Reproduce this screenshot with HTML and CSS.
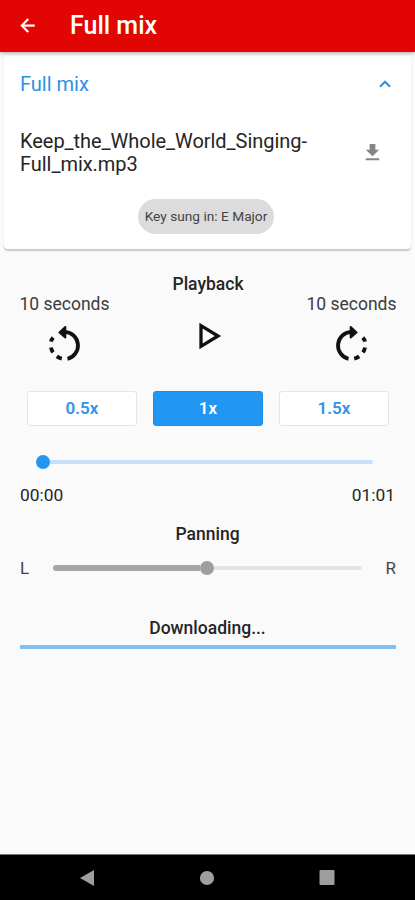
FILE: index.html
```html
<!DOCTYPE html>
<html lang="en">
<head>
<meta charset="utf-8">
<title>Full mix</title>
<link rel="stylesheet" href="styles.css">
</head>
<body>
<header class="appbar">
  <svg class="back" viewBox="0 0 24 24"><path d="M20 11H7.83l5.59-5.59L12 4l-8 8 8 8 1.41-1.41L7.83 13H20v-2z"/></svg>
  <h1>Full mix</h1>
</header>
<main>
  <section class="card">
    <div class="card-head"><span>Full mix</span>
      <svg class="chevron" viewBox="0 0 12 8"><path d="M1 6.7 6 1.7 11 6.7"/></svg>
    </div>
    <div class="file">
      <p>Keep_the_Whole_World_Singing-<br>Full_mix.mp3</p>
      <svg class="download" viewBox="0 0 24 24"><path d="M19 9h-4V3H9v6H5l7 7 7-7zM5 18v2h14v-2H5z"/></svg>
    </div>
    <span class="chip">Key sung in: E Major</span>
  </section>
  <section class="playback">
    <div class="seek"><span>10 seconds</span>
      <svg class="rotate" viewBox="0 0 42 42"><path d="M21 9.8A13.7 13.7 0 0 1 23.5 36.8M7 19.6Q7.5 17.4 9.2 15.6M7 25.5Q7.4 28.2 9 30.4M12.8 34.4Q15 36 17.8 36.7"/><path class="arrow" d="M21.3 5v10.5L15.5 10.5z"/></svg>
    </div>
    <div class="center"><h2>Playback</h2>
      <svg class="play" viewBox="0 0 24 30"><path d="M3 4.7v20.6L20 15z"/></svg>
    </div>
    <div class="seek"><span>10 seconds</span>
      <svg class="rotate mirror" viewBox="0 0 42 42"><path d="M21 9.8A13.7 13.7 0 0 1 23.5 36.8M7 19.6Q7.5 17.4 9.2 15.6M7 25.5Q7.4 28.2 9 30.4M12.8 34.4Q15 36 17.8 36.7"/><path class="arrow" d="M21.3 5v10.5L15.5 10.5z"/></svg>
    </div>
  </section>
  <div class="speeds"><button>0.5x</button><button class="active">1x</button><button>1.5x</button></div>
  <div class="progress"><i class="thumb"></i><i class="rail"></i></div>
  <div class="times"><span>00:00</span><span>01:01</span></div>
  <h2 class="pan-title">Panning</h2>
  <div class="pan"><span>L</span><div class="pan-slider"><i class="filled"></i><i class="thumb"></i><i class="rail"></i></div><span class="right">R</span></div>
  <h2 class="status">Downloading...</h2>
  <div class="loading"></div>
</main>
<nav>
  <svg viewBox="0 0 16 18"><path d="M15 1v16L1 9z"/></svg>
  <svg viewBox="0 0 16 18"><circle cx="8" cy="9" r="7.1"/></svg>
  <svg viewBox="0 0 16 18"><rect x=".5" y="1" width="15" height="15" rx="1"/></svg>
</nav>
</body>
</html>
```
FILE: styles.css
```css
* { box-sizing: border-box; }
body {
  margin: 0;
  height: 900px;
  display: flex;
  flex-direction: column;
  background: #fafafa;
  color: #252525;
  font-family: Roboto, sans-serif;
  overflow: hidden;
}
h1, h2, p { margin: 0; }
svg { display: block; flex: none; }
.appbar {
  height: 52px;
  flex: none;
  display: flex;
  align-items: center;
  padding: 0 0 2px 17px;
  background: #e10504;
  color: #fff;
  box-shadow: 0 1px 4px rgba(0, 0, 0, .35);
  z-index: 1;
}
.back { width: 21px; height: 21px; fill: #fff; stroke: #fff; stroke-width: .5; }
h1 { margin: 2px 0 0 32px; font-size: 25px; line-height: 30px; font-weight: 500; }
main { flex: 1; }
.card {
  margin: 4px 4px 0;
  height: 193px;
  padding: 0 16px;
  background: #fff;
  border-radius: 4px;
  box-shadow: 0 1.5px 1.5px rgba(0, 0, 0, .2);
  display: flex;
  flex-direction: column;
}
.card-head {
  height: 56px;
  display: flex;
  align-items: center;
  justify-content: space-between;
  color: #2b91e5;
  font-size: 20px;
}
.chevron { width: 12px; height: 8px; margin-right: 4px; fill: none; stroke: #2b91e5; stroke-width: 2; }
.file {
  margin-top: 18px;
  display: flex;
  justify-content: space-between;
  font-size: 20px;
  line-height: 23px;
  letter-spacing: -.04px;
}
.download { width: 23px; height: 23px; margin: 11px 11px 0 0; fill: #858585; }
.chip {
  align-self: center;
  margin: 23px 3px 0 0;
  width: 136px;
  height: 35px;
  border-radius: 18px;
  background: #dcdcdc;
  color: #444;
  font-size: 13.7px;
  line-height: 34px;
  text-align: center;
  white-space: nowrap;
}
.playback {
  display: flex;
  justify-content: space-between;
  margin-top: 21px;
  padding: 0 19px 0 20px;
  height: 121px;
}
.seek {
  width: 89px;
  padding-top: 23px;
  font-size: 17.5px;
  line-height: 22px;
  display: flex;
  flex-direction: column;
  align-items: center;
  color: #3c3c3c;
  white-space: nowrap;
}
.rotate { width: 42px; height: 42px; margin-top: 7px; fill: none; stroke: #111; stroke-width: 3.8; }
.rotate .arrow { fill: #111; stroke-width: 2; stroke-linejoin: round; }
.mirror { transform: scaleX(-1); }
.center { display: flex; flex-direction: column; align-items: center; padding-top: 4px; }
h2 { font-size: 17.5px; line-height: 20px; font-weight: 500; text-align: center; }
.play { width: 24px; height: 30px; margin: 27px 0 0 4px; fill: none; stroke: #111; stroke-width: 3.3; }
.speeds { display: flex; gap: 16px; padding: 0 26px 0 27px; }
button {
  flex: 1;
  height: 35px;
  padding: 0 0 2px;
  border: 1px solid #e6e6e6;
  border-radius: 3px;
  background: #fff;
  color: #3193ea;
  font: 600 17px Roboto, sans-serif;
}
button.active { background: #2196f3; border-color: #1c8ee8; color: #fff; }
.progress { height: 14px; margin: 29px 42px 0 36px; display: flex; align-items: center; }
.thumb { width: 14px; height: 14px; flex: none; border-radius: 50%; background: #2196f3; }
.rail { flex: 1; height: 4px; border-radius: 0 2px 2px 0; background: #c8dffa; }
.times { display: flex; justify-content: space-between; margin: 15px 20px 0 20px; font-size: 17.4px; line-height: 22px; }
.pan-title { margin-top: 18px; }
.pan { display: flex; align-items: center; margin: 13px 19px 0 20px; height: 22px; font-size: 17px; color: #444; }
.pan > span { width: 32.5px; }
.pan > .right { margin-left: auto; text-align: right; }
.pan-slider { width: 309px; flex: none; display: flex; align-items: center; }
.pan-slider .filled { width: 147.5px; height: 6px; border-radius: 3px 0 0 3px; background: #a6a6a6; }
.pan-slider .thumb { background: #9e9e9e; }
.pan-slider .rail { background: #e3e3e3; }
.status { margin-top: 39px; }
.loading { height: 4px; margin: 7px 19px 0 20px; background: #80c1f2; }
nav {
  height: 46px;
  flex: none;
  display: flex;
  align-items: center;
  gap: 104px;
  padding-left: 79px;
  background: #000;
  border-top: 1px solid #777;
}
nav svg { width: 16px; height: 18px; fill: #9e9e9e; }
```
